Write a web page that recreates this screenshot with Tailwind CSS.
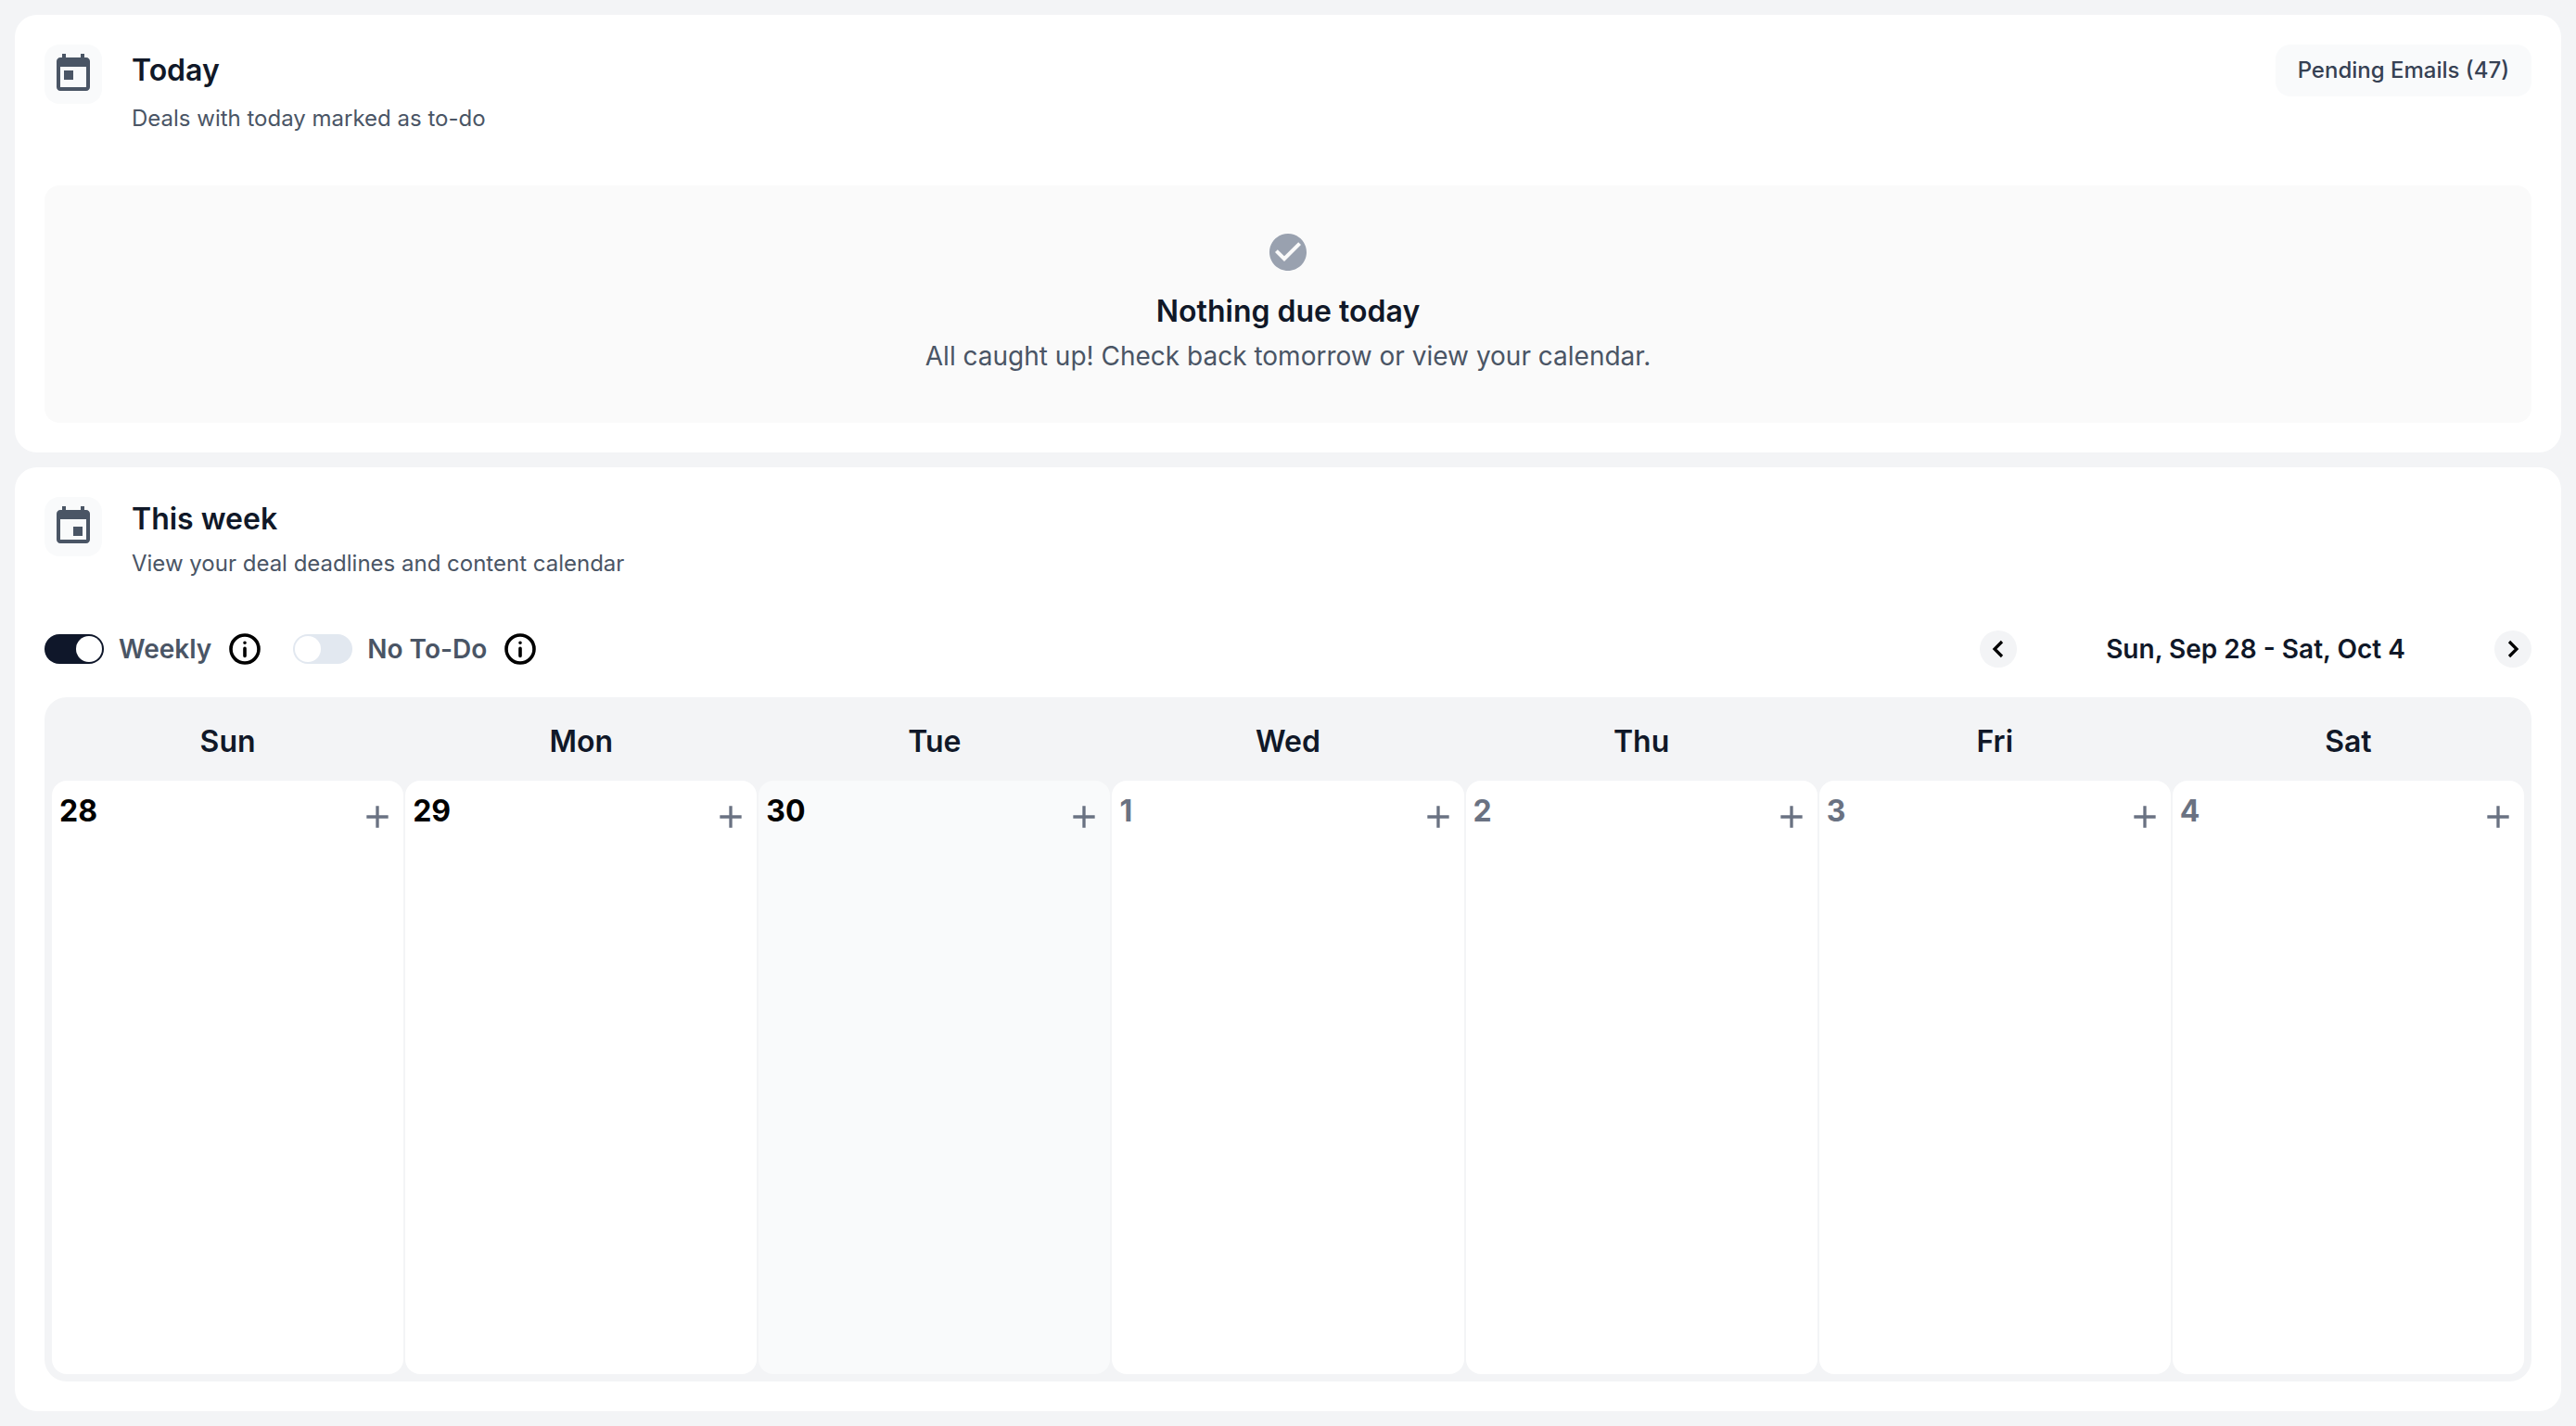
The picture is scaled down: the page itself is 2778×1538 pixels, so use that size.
<!DOCTYPE html>
<html lang="en">
<head>
    <meta charset="UTF-8">
    <meta name="viewport" content="width=device-width, initial-scale=1.0">
    <script src="https://cdn.jsdelivr.net/npm/@tailwindcss/browser@4"></script>
    <title>Deals</title>
</head>
<body class="bg-[#f3f4f6] font-['Inter',sans-serif]">
    <div class="flex flex-col gap-4 p-4 h-[1538px]">

        <!-- today -->
        <section class="bg-white rounded-3xl p-8">
            <div class="flex items-start justify-between h-[96px]">
                <div class="flex items-start gap-8">
                    <div class="flex items-center justify-center w-[62px] h-16 rounded-2xl bg-gray-50">
                        <svg class="w-12 h-12 text-gray-600" viewBox="0 0 24 24" fill="currentColor"><path d="M19 3h-1V1h-2v2H8V1H6v2H5c-1.11 0-1.99.9-1.99 2L3 19c0 1.1.89 2 2 2h14c1.1 0 2-.9 2-2V5c0-1.1-.9-2-2-2zm0 16H5V8h14v11zM7 10h5v5H7z"/></svg>
                    </div>
                    <div>
                        <h2 class="mt-2 text-[32px] leading-10 font-semibold text-gray-900">Today</h2>
                        <p class="mt-4 text-2xl leading-8 text-gray-600">Deals with today marked as to-do</p>
                    </div>
                </div>
                <div class="flex items-center h-14 px-6 rounded-2xl bg-gray-50 text-2xl font-medium text-gray-700">Pending Emails (47)</div>
            </div>
            <div class="mt-14 h-[256px] pt-12 rounded-2xl bg-[#fafafa] flex flex-col items-center">
                <svg class="w-12 h-12 text-gray-400" viewBox="0 0 24 24" fill="currentColor"><path d="M12 2C6.48 2 2 6.48 2 12s4.48 10 10 10 10-4.48 10-10S17.52 2 12 2zm-2 15-5-5 1.41-1.41L10 14.17l7.59-7.59L19 8l-9 9z"/></svg>
                <h3 class="mt-5 text-[32px] leading-10 font-semibold text-gray-900">Nothing due today</h3>
                <p class="mt-2 text-[28px] leading-10 text-gray-600">All caught up! Check back tomorrow or view your calendar.</p>
            </div>
        </section>

        <!-- this week -->
        <section class="flex-1 bg-white rounded-3xl p-8">
            <div class="flex items-start gap-8">
                <div class="flex items-center justify-center w-[62px] h-16 rounded-2xl bg-gray-50">
                    <svg class="w-12 h-12 text-gray-600" viewBox="0 0 24 24" fill="currentColor"><path d="M17 12h-5v5h5v-5zM16 1v2H8V1H6v2H5c-1.11 0-1.99.9-1.99 2L3 19c0 1.1.89 2 2 2h14c1.1 0 2-.9 2-2V5c0-1.1-.9-2-2-2h-1V1h-2zm3 18H5V8h14v11z"/></svg>
                </div>
                <div>
                    <h2 class="mt-1 text-[32px] leading-10 font-semibold text-gray-900">This week</h2>
                    <p class="mt-3 text-2xl leading-8 text-gray-600">View your deal deadlines and content calendar</p>
                </div>
            </div>

            <div class="mt-14 flex items-center justify-between h-10">
                <div class="flex items-center">
                    <div class="flex justify-end items-center w-16 h-8 p-0.5 rounded-full bg-[#0f172a]">
                        <div class="w-7 h-7 rounded-full bg-white"></div>
                    </div>
                    <span class="ml-4 text-[28px] font-semibold text-gray-600">Weekly</span>
                    <svg class="ml-[18px] w-9 h-9 text-black" viewBox="0 0 24 24" fill="none" stroke="currentColor" stroke-width="2.4" stroke-linecap="round"><circle cx="12" cy="12" r="10"/><path d="M12 17v-5.500M12 7.500h.01"/></svg>
                    <div class="ml-[34px] flex items-center w-16 h-8 p-0.5 rounded-full bg-[#e2e8f0]">
                        <div class="w-7 h-7 rounded-full bg-white"></div>
                    </div>
                    <span class="ml-4 text-[28px] font-semibold text-gray-600">No To-Do</span>
                    <svg class="ml-[18px] w-9 h-9 text-black" viewBox="0 0 24 24" fill="none" stroke="currentColor" stroke-width="2.4" stroke-linecap="round"><circle cx="12" cy="12" r="10"/><path d="M12 17v-5.500M12 7.500h.01"/></svg>
                </div>
                <div class="flex items-center justify-between w-[595px]">
                    <div class="flex items-center justify-center w-10 h-10 rounded-full bg-gray-100">
                        <svg class="w-8 h-8 text-black" viewBox="0 0 24 24" fill="none" stroke="currentColor" stroke-width="2.4"><path d="m15 18-6-6 6-6"/></svg>
                    </div>
                    <span class="text-[28px] font-semibold text-gray-900">Sun, Sep 28 - Sat, Oct 4</span>
                    <div class="flex items-center justify-center w-10 h-10 rounded-full bg-gray-100">
                        <svg class="w-8 h-8 text-black" viewBox="0 0 24 24" fill="none" stroke="currentColor" stroke-width="2.4"><path d="m9 18 6-6-6-6"/></svg>
                    </div>
                </div>
            </div>

            <div class="mt-8 h-[738px] rounded-3xl bg-gray-100 px-2 pb-2 flex flex-col">
                <div class="grid grid-cols-7 gap-0.5 h-[90px] pt-1.5 items-center text-center text-[32px] font-semibold text-gray-900">
                    <div>Sun</div><div>Mon</div><div>Tue</div><div>Wed</div><div>Thu</div><div>Fri</div><div>Sat</div>
                </div>
                <div class="grid grid-cols-7 gap-0.5 flex-1">
                    <div class="flex justify-between rounded-2xl bg-white p-2">
                        <span class="text-[32px] leading-[50px] font-bold text-black">28</span>
                        <svg class="mt-[11px] w-10 h-10 text-gray-500" viewBox="0 0 24 24" fill="currentColor"><path d="M19 13h-6v6h-2v-6H5v-2h6V5h2v6h6v2z"/></svg>
                    </div>
                    <div class="flex justify-between rounded-2xl bg-white p-2">
                        <span class="text-[32px] leading-[50px] font-bold text-black">29</span>
                        <svg class="mt-[11px] w-10 h-10 text-gray-500" viewBox="0 0 24 24" fill="currentColor"><path d="M19 13h-6v6h-2v-6H5v-2h6V5h2v6h6v2z"/></svg>
                    </div>
                    <div class="flex justify-between rounded-2xl bg-gray-50 p-2">
                        <span class="text-[32px] leading-[50px] font-bold text-black">30</span>
                        <svg class="mt-[11px] w-10 h-10 text-gray-500" viewBox="0 0 24 24" fill="currentColor"><path d="M19 13h-6v6h-2v-6H5v-2h6V5h2v6h6v2z"/></svg>
                    </div>
                    <div class="flex justify-between rounded-2xl bg-white p-2">
                        <span class="text-[32px] leading-[50px] font-bold text-gray-500">1</span>
                        <svg class="mt-[11px] w-10 h-10 text-gray-500" viewBox="0 0 24 24" fill="currentColor"><path d="M19 13h-6v6h-2v-6H5v-2h6V5h2v6h6v2z"/></svg>
                    </div>
                    <div class="flex justify-between rounded-2xl bg-white p-2">
                        <span class="text-[32px] leading-[50px] font-bold text-gray-500">2</span>
                        <svg class="mt-[11px] w-10 h-10 text-gray-500" viewBox="0 0 24 24" fill="currentColor"><path d="M19 13h-6v6h-2v-6H5v-2h6V5h2v6h6v2z"/></svg>
                    </div>
                    <div class="flex justify-between rounded-2xl bg-white p-2">
                        <span class="text-[32px] leading-[50px] font-bold text-gray-500">3</span>
                        <svg class="mt-[11px] w-10 h-10 text-gray-500" viewBox="0 0 24 24" fill="currentColor"><path d="M19 13h-6v6h-2v-6H5v-2h6V5h2v6h6v2z"/></svg>
                    </div>
                    <div class="flex justify-between rounded-2xl bg-white p-2">
                        <span class="text-[32px] leading-[50px] font-bold text-gray-500">4</span>
                        <svg class="mt-[11px] w-10 h-10 text-gray-500" viewBox="0 0 24 24" fill="currentColor"><path d="M19 13h-6v6h-2v-6H5v-2h6V5h2v6h6v2z"/></svg>
                    </div>
                </div>
            </div>
        </section>
    </div>
</body>
</html>
